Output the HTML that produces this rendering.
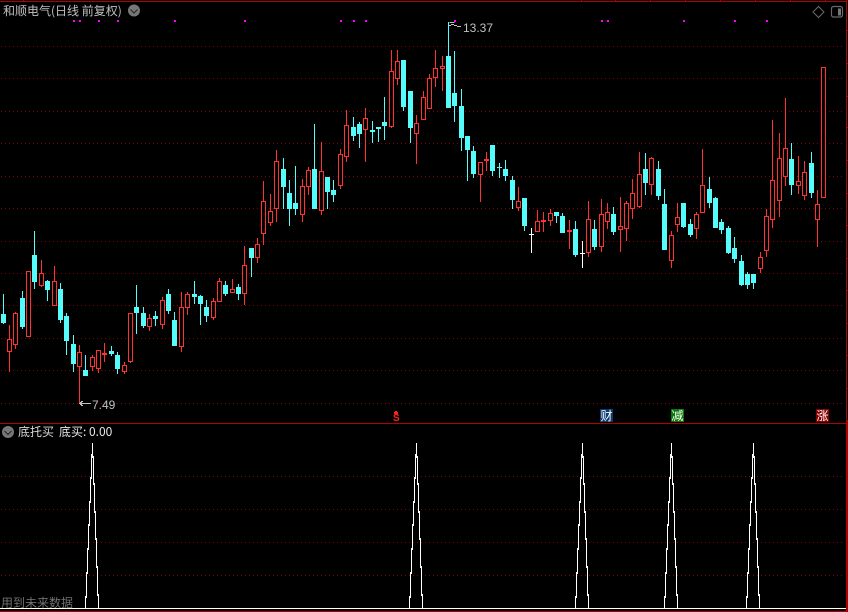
<!DOCTYPE html>
<html><head><meta charset="utf-8"><title>和顺电气</title>
<style>
html,body{margin:0;padding:0;background:#000;width:848px;height:612px;overflow:hidden}
body{position:relative;font-family:"Liberation Sans","WenQuanYi Zen Hei","Noto Sans CJK SC",sans-serif}
svg{position:absolute;left:0;top:0}
.t{position:absolute;white-space:nowrap;font-size:12px;line-height:14px;font-family:"WenQuanYi Zen Hei","Noto Sans CJK SC",sans-serif}
.n{position:absolute;white-space:nowrap;font-size:12px;line-height:14px;font-family:"Liberation Sans",sans-serif}
.b{position:absolute;width:13px;height:13px;color:#fff;font-size:12px;line-height:13px;text-align:center;font-family:"WenQuanYi Zen Hei","Noto Sans CJK SC",sans-serif}
</style></head><body>
<svg width="848" height="612" viewBox="0 0 848 612" shape-rendering="crispEdges">
<path fill="none" stroke="#8a0000" stroke-dasharray="1 3" d="M1 46.5H844M1 78.5H844M1 111.5H844M1 143.5H844M1 176.5H844M1 208.5H844M1 241.5H844M1 273.5H844M1 305.5H844M1 338.5H844M1 370.5H844M1 403.5H844M1 476.5H844M1 509.5H844M1 542.5H844M1 575.5H844"/>
<path fill="none" stroke="#b00000" d="M0 1.5H846M846.5 0V612M0 423.5H846M0 611.5H848M847.5 420V612M23.5 0V1M581.5 0V1M615.5 0V1M650.5 0V1M685.5 0V1M720.5 0V1M755.5 0V1M790.5 0V1M825.5 0V1M847 30.5h1M847 63.5h1M847 96.5h1M847 127.5h1M847 160.5h1M847 193.5h1M847 225.5h1M847 258.5h1M847 290.5h1M847 323.5h1M847 355.5h1M847 388.5h1"/>
<path fill="#ff00ff" d="M73 20h2v2h-2zM79 20h2v2h-2zM98 20h2v2h-2zM117 20h2v2h-2zM174 20h2v2h-2zM244 20h2v2h-2zM340 20h2v2h-2zM353 20h2v2h-2zM365 20h2v2h-2zM454 20h2v2h-2zM601 20h2v2h-2zM607 20h2v2h-2zM683 20h2v2h-2zM734 20h2v2h-2zM766 20h2v2h-2z"/>
<!-- cyan wicks -->
<path fill="none" stroke="#54fcfc" d="M3.5 294V324M22.5 291V329M34.5 231V289M47.5 280V301M60.5 283V323M66.5 313V355M73.5 335V372M85.5 355V376M111.5 346V356M117.5 352V374M136.5 285V334M143.5 307V328M155.5 311V326M168.5 289V314M174.5 312V346M194.5 281V304M200.5 295V325M206.5 300V322M225.5 281V296M238.5 284V300M251.5 248V277M283.5 158V209M289.5 180V226M295.5 166V215M314.5 124V209M327.5 177V209M333.5 180V202M353.5 117V141M359.5 122V148M372.5 121V143M378.5 127V142M384.5 97V140M403.5 60V111M410.5 91V143M448.5 22V108M454.5 51V122M461.5 89V151M467.5 136V181M473.5 146V178M492.5 145V176M499.5 163V178M505.5 160V181M512.5 176V209M524.5 198V231M556.5 212V223M562.5 213V233M575.5 221V257M594.5 220V250M613.5 207V235M645.5 153V195M658.5 161V200M664.5 189V250M683.5 203V228M690.5 219V237M709.5 177V208M715.5 197V228M721.5 219V234M728.5 226V254M734.5 237V263M741.5 255V286M747.5 272V289M753.5 274V289M791.5 143V195M811.5 152V198"/>
<!-- cyan bodies -->
<path fill="#54fcfc" d="M1 314h5V323h-5zM20 298h5V327h-5zM32 255h5V282h-5zM45 281h5V290h-5zM58 289h5V320h-5zM64 316h5V341h-5zM71 344h5V364h-5zM83 370h5V376h-5zM109 351h5V354h-5zM115 355h5V369h-5zM134 307h5V313h-5zM141 313h5V326h-5zM153 316h5V319h-5zM166 294h5V311h-5zM172 320h5V346h-5zM192 294h5V297h-5zM198 296h5V304h-5zM204 307h5V316h-5zM223 285h5V294h-5zM236 287h5V294h-5zM249 248h5V258h-5zM281 169h5V187h-5zM287 193h5V209h-5zM293 203h5V209h-5zM312 169h5V209h-5zM325 177h5V192h-5zM331 190h5V195h-5zM351 127h5V136h-5zM357 124h5V134h-5zM370 130h5V132h-5zM376 127h5V129h-5zM382 122h5V126h-5zM401 60h5V107h-5zM408 91h5V128h-5zM446 56h5V108h-5zM452 93h5V106h-5zM459 106h5V138h-5zM465 136h5V150h-5zM471 151h5V174h-5zM490 145h5V171h-5zM497 167h5V168h-5zM503 169h5V176h-5zM510 180h5V200h-5zM522 198h5V226h-5zM554 212h5V216h-5zM560 216h5V233h-5zM573 229h5V255h-5zM592 229h5V247h-5zM611 214h5V232h-5zM643 169h5V183h-5zM656 169h5V196h-5zM662 204h5V250h-5zM681 203h5V227h-5zM688 224h5V235h-5zM707 189h5V203h-5zM713 198h5V228h-5zM719 222h5V230h-5zM726 228h5V253h-5zM732 248h5V259h-5zM739 261h5V285h-5zM745 274h5V285h-5zM751 274h5V283h-5zM789 159h5V185h-5zM809 163h5V193h-5z"/>
<!-- red wicks -->
<path fill="none" stroke="#ff3232" d="M9.5 325V372M15.5 312V349M41.5 260V287M54.5 266V306M79.5 345V403M92.5 355V371M98.5 350V373M124.5 362V374M130.5 313V363M149.5 314V331M162.5 297V329M181.5 292V352M187.5 292V315M213.5 298V320M219.5 278V302M232.5 279V293M244.5 246V305M257.5 238V263M263.5 181V245M270.5 194V226M276.5 150V222M302.5 179V222M308.5 167V195M321.5 142V215M340.5 149V189M346.5 110V162M365.5 108V162M391.5 50V128M397.5 50V85M416.5 115V164M423.5 91V120M429.5 74V109M435.5 50V87M442.5 56V91M480.5 162V202M518.5 187V211M537.5 210V232M550.5 209V226M588.5 201V257M601.5 199V252M607.5 203V229M620.5 197V252M626.5 201V241M632.5 179V219M639.5 152V208M651.5 157V195M671.5 231V268M677.5 203V232M696.5 212V239M702.5 149V213M760.5 252V273M766.5 209V257M772.5 120V228M779.5 133V217M785.5 98V186M798.5 156V194M804.5 161V200M817.5 190V247M104.5 343V362M486.5 152V171M543.5 212V232M569.5 220V249"/>
<!-- red hollow bodies -->
<path fill="#000" stroke="#ff3232" d="M7.5 339.5h4V351.5h-4zM13.5 313.5h4V344.5h-4zM26.5 271.5h4V336.5h-4zM39.5 273.5h4V285.5h-4zM52.5 281.5h4V305.5h-4zM77.5 352.5h4V366.5h-4zM90.5 357.5h4V366.5h-4zM96.5 350.5h4V368.5h-4zM122.5 365.5h4V371.5h-4zM128.5 313.5h4V361.5h-4zM147.5 318.5h4V326.5h-4zM160.5 300.5h4V324.5h-4zM179.5 307.5h4V346.5h-4zM185.5 294.5h4V307.5h-4zM211.5 301.5h4V317.5h-4zM217.5 281.5h4V301.5h-4zM230.5 289.5h4V292.5h-4zM242.5 265.5h4V293.5h-4zM255.5 244.5h4V257.5h-4zM261.5 201.5h4V233.5h-4zM268.5 211.5h4V222.5h-4zM274.5 161.5h4V208.5h-4zM300.5 186.5h4V214.5h-4zM306.5 170.5h4V186.5h-4zM319.5 171.5h4V210.5h-4zM338.5 154.5h4V185.5h-4zM344.5 125.5h4V156.5h-4zM363.5 118.5h4V129.5h-4zM389.5 71.5h4V126.5h-4zM395.5 61.5h4V78.5h-4zM414.5 123.5h4V133.5h-4zM421.5 97.5h4V119.5h-4zM427.5 78.5h4V108.5h-4zM433.5 68.5h4V77.5h-4zM440.5 66.5h4V68.5h-4zM478.5 162.5h4V174.5h-4zM516.5 201.5h4V207.5h-4zM535.5 221.5h4V231.5h-4zM548.5 213.5h4V220.5h-4zM586.5 219.5h4V252.5h-4zM599.5 214.5h4V246.5h-4zM605.5 212.5h4V221.5h-4zM618.5 226.5h4V229.5h-4zM624.5 203.5h4V228.5h-4zM630.5 193.5h4V208.5h-4zM637.5 174.5h4V206.5h-4zM649.5 158.5h4V184.5h-4zM669.5 235.5h4V260.5h-4zM675.5 217.5h4V224.5h-4zM694.5 214.5h4V228.5h-4zM700.5 185.5h4V212.5h-4zM758.5 257.5h4V268.5h-4zM764.5 216.5h4V250.5h-4zM770.5 180.5h4V219.5h-4zM777.5 158.5h4V200.5h-4zM783.5 148.5h4V176.5h-4zM796.5 181.5h4V185.5h-4zM802.5 172.5h4V195.5h-4zM815.5 204.5h4V219.5h-4zM821.5 67.5h4V197.5h-4z"/>
<!-- solid red dashes -->
<path fill="#ff3232" d="M102 353h5v2h-5zM484 159h5v2h-5zM541 220h5v2h-5zM567 230h5v2h-5z"/>
<!-- white crosses -->
<path fill="none" stroke="#fff" d="M531.5 228V253M529 234.5h5M582.5 241V268M580 253.5h5"/>
<!-- high/low markers -->
<path fill="none" stroke="#c0c0c0" d="M449.5 22.5h5M449 25.5h2M451 24.5h3M454 25.5h3M457 26.5h4M79 403.5h12M80 402.5h2M81 401.5h2M80 404.5h2M81 405.5h2"/>
<!-- bottom panel -->
<defs><path id="pk" fill="none" stroke="#fff" d="M92.5 443v13m-1 -2v25m-1 -2v26m-1 -2v25m-1 -2v26m-1 -2v26m-1 -2v26m-1 -2v13M92.5 443v15m1 -2v29m1 -2v30m1 -2v29m1 -2v30m1 -2v30m1 -2v15"/></defs>
<use href="#pk"/><use href="#pk" x="324"/><use href="#pk" x="490"/><use href="#pk" x="579"/><use href="#pk" x="661"/>
<path fill="none" stroke="#fff" d="M0 608.5H846"/>
<!-- S triangle -->
<path fill="#ff2020" d="M395 411h2v1h-2zM394 412h4v2h-4z"/>
<!-- top-right icons -->
<g shape-rendering="auto" fill="none" stroke="#6a6a6a">
<path d="M818.5 6.5l5.5 5.5-5.5 5.5-5.5-5.5z"/>
<rect x="831.5" y="6.5" width="11" height="10.5" rx="2" stroke-width="1.2"/>
<rect x="838" y="8.5" width="3" height="7" fill="#777" stroke="none"/>
<circle cx="134" cy="10.5" r="6" fill="#777" stroke="none"/>
<path d="M130.5 9.5l3.5 3.5 3.5-3.5" stroke="#2c2c2c" stroke-width="1.2"/>
<circle cx="8" cy="432" r="6" fill="#777" stroke="none"/>
<path d="M4.5 431l3.5 3.5 3.5-3.5" stroke="#2c2c2c" stroke-width="1.2"/>
</g>
</svg>
<div class="t" style="left:3px;top:4px;color:#c0c0c0">和顺电气(日线 前复权)</div>
<div class="t" style="left:18px;top:425px;color:#d8d8d8">底托买</div>
<div class="t" style="left:59px;top:425px;color:#e8e8e8">底买: 0.00</div>
<div class="t" style="left:1px;top:596px;color:#707070">用到未来数据</div>
<div class="n" style="left:463px;top:21px;color:#c0c0c0">13.37</div>
<div class="n" style="left:92px;top:398px;color:#c0c0c0">7.49</div>
<div class="t" style="left:393px;top:414px;width:7px;color:#ff2020;font-size:10px;line-height:9px;font-family:'Liberation Sans',sans-serif;font-weight:bold">S</div>
<div class="b" style="left:600px;top:409px;background:#0a3a70">财</div>
<div class="b" style="left:671px;top:409px;background:#0a780a">减</div>
<div class="b" style="left:816px;top:409px;background:#860000">涨</div>
</body></html>
